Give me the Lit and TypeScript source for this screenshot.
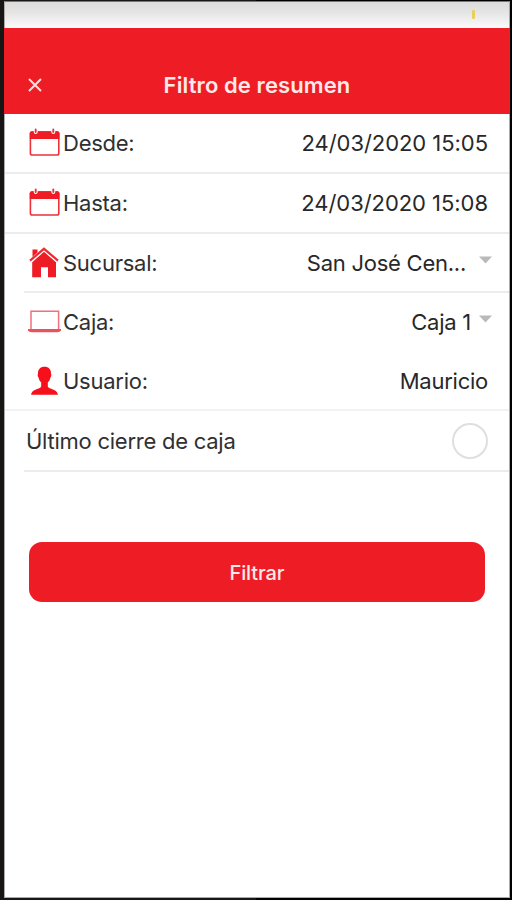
import { LitElement, html, css, svg, nothing } from "lit";
import { customElement } from "lit/decorators.js";
import { classMap } from "lit/directives/class-map.js";

const icons: Record<string, unknown> = {
  calendar: svg`
    <rect x="2.4" y="5" width="28.4" height="23" rx="1.8" fill="none" stroke="#f0303a" stroke-width="1.6"/>
    <path d="M1.8 12V6.2Q1.8 4.2 3.8 4.2H29.4Q31.4 4.2 31.4 6.2V12Z" fill="#ee1c25"/>
    <path d="M7.7 2.4V5M25.3 2.4V5" stroke="#fff" stroke-width="4" stroke-linecap="round"/>
    <path d="M7.7 2.4V5M25.3 2.4V5" stroke="#f0303a" stroke-width="1.9" stroke-linecap="round"/>`,
  house: svg`
    <path d="M4.5 2.5H9.5V7L4.5 11.5Z" fill="#ee1c25"/>
    <path d="M16 4.8L28 15.2V30.3H20V20.3H13V30.3H4.2V15.2Z" fill="#ee1c25"/>
    <path d="M2 14L16 2.2L30 14" fill="none" stroke="#fff" stroke-width="3.4"/>
    <path d="M2 13.6L16 1.8L30 13.6" fill="none" stroke="#ee2a33" stroke-width="2.2"/>`,
  laptop: svg`
    <path d="M3 23.5V5.3H30.6V23.5" fill="none" stroke="#f2707a" stroke-width="1.5"/>
    <path d="M0 23H33V24.3Q32 26.3 29.5 26.3H3.5Q1 26.3 0 24.3Z" fill="#e8545e"/>`,
  user: svg`
    <path d="M16.5 1.8C20.8 1.8 23.2 4.5 23 8.8C23.6 9.2 23.4 12 22.4 12.6C22 15 21 16.5 19.8 17.6V21.5C21 24.5 29 23.5 30 29.7H3C4 23.5 12 24.5 13.2 21.5V17.6C12 16.5 11 15 10.6 12.6C9.6 12 9.4 9.2 10 8.8C9.8 4.5 12.2 1.8 16.5 1.8Z" fill="#f5101c"/>`,
};

interface Row {
  icon: string;
  label: string;
  value: string;
  kind: string;
  select?: boolean;
}

const rows: Row[] = [
  { icon: "calendar", label: "Desde:", value: "24/03/2020 15:05", kind: "desde" },
  { icon: "calendar", label: "Hasta:", value: "24/03/2020 15:08", kind: "hasta" },
  { icon: "house", label: "Sucursal:", value: "San José Cen...", kind: "sucursal", select: true },
  { icon: "laptop", label: "Caja:", value: "Caja 1", kind: "caja", select: true },
  { icon: "user", label: "Usuario:", value: "Mauricio", kind: "usuario" },
];

@customElement("app-root")
export class AppRoot extends LitElement {
  static styles = css`
    :host {
      display: block;
      box-sizing: border-box;
      width: 512px;
      height: 900px;
      padding: 1px 2px 2px 4px;
      background: linear-gradient(90deg, #181615 0 50%, #000 50%);
      overflow: hidden;
      font-family: Inter, "Liberation Sans", sans-serif;
      font-size: 22px;
      letter-spacing: -0.25px;
      color: #303030;
    }
    * { box-sizing: border-box; }
    .screen {
      height: 897px;
      background: #fff;
      border: 1px solid #aaa;
      border-top-color: #777;
      display: flex;
      flex-direction: column;
    }
    .status {
      flex: none;
      height: 26px;
      background: linear-gradient(#dcdcdc, #e3e3e3 35%, #fafafa);
      display: flex;
      justify-content: flex-end;
      padding: 8px 34px 0 0;
    }
    .battery { width: 3px; height: 9px; border-radius: 1px; background: #e9d05c; }
    .header {
      flex: none;
      height: 86px;
      margin: 0 -1px;
      background: #ee1c25;
      color: #ffe9e9;
      display: grid;
      grid-template-columns: 62px 1fr 62px;
      align-items: center;
      padding-top: 28px;
    }
    .close { display: block; margin-left: 24px; width: 14px; height: 14px; }
    .title {
      margin: 0;
      text-align: center;
      font-size: 22px;
      line-height: 28px;
      font-weight: 600;
      white-space: nowrap;
      letter-spacing: 0.1px;
    }
    .row {
      flex: none;
      height: 60px;
      display: flex;
      align-items: center;
      padding: 0 21px 0 23px;
      border-bottom: 2px solid #ececec;
      white-space: nowrap;
    }
    .desde { padding-bottom: 1px; }
    .sucursal, .caja { height: 59px; }
    .sucursal, .last { border-image: linear-gradient(90deg, transparent 21px, #ececec 21px) 2; }
    .caja { border-bottom-color: transparent; }
    .usuario { height: 59px; border-bottom-color: #f2f2f2; }
    .last { height: 61px; padding-left: 21px; }
    .icon { flex: none; width: 33px; height: 32px; margin-right: 2px; }
    .value { margin-left: auto; color: #282828; }
    .desde .value, .hasta .value { letter-spacing: -0.05px; }
    .arrow { flex: none; width: 13px; height: 8px; margin: -6px -4px 0 8px; }
    .sucursal .arrow { margin-left: 13px; }
    .check {
      margin-left: auto;
      width: 36px;
      height: 36px;
      border: 2px solid #dfdfdf;
      border-radius: 50%;
    }
    .button {
      flex: none;
      height: 60px;
      margin: 70px 24px 0 24px;
      border: 0;
      border-radius: 13px;
      background: #ee1c25;
      color: #ffe9e9;
      font: 500 20px Inter, "Liberation Sans", sans-serif;
      letter-spacing: -0.1px;
      padding: 2px 0 0;
    }
  `;

  private renderRow(r: Row) {
    return html`<div class=${classMap({ row: true, [r.kind]: true })}>
      <svg class="icon" viewBox="0 0 33 32">${icons[r.icon]}</svg>
      <span class="label">${r.label}</span>
      <span class="value">${r.value}</span>
      ${r.select
        ? html`<svg class="arrow" viewBox="0 0 13 8"><path d="M0 0.5H13L6.5 7.5Z" fill="#b9b9b9" /></svg>`
        : nothing}
    </div>`;
  }

  render() {
    return html`<div class="screen">
      <div class="status"><span class="battery"></span></div>
      <header class="header">
        <svg class="close" viewBox="0 0 14 14">
          <path d="M1 1L13 13M13 1L1 13" stroke="#ffdede" stroke-width="2" />
        </svg>
        <h1 class="title">Filtro de resumen</h1>
      </header>
      ${rows.map((r) => this.renderRow(r))}
      <div class="row last">
        <span class="label">Último cierre de caja</span>
        <span class="check"></span>
      </div>
      <button class="button">Filtrar</button>
    </div>`;
  }
}
